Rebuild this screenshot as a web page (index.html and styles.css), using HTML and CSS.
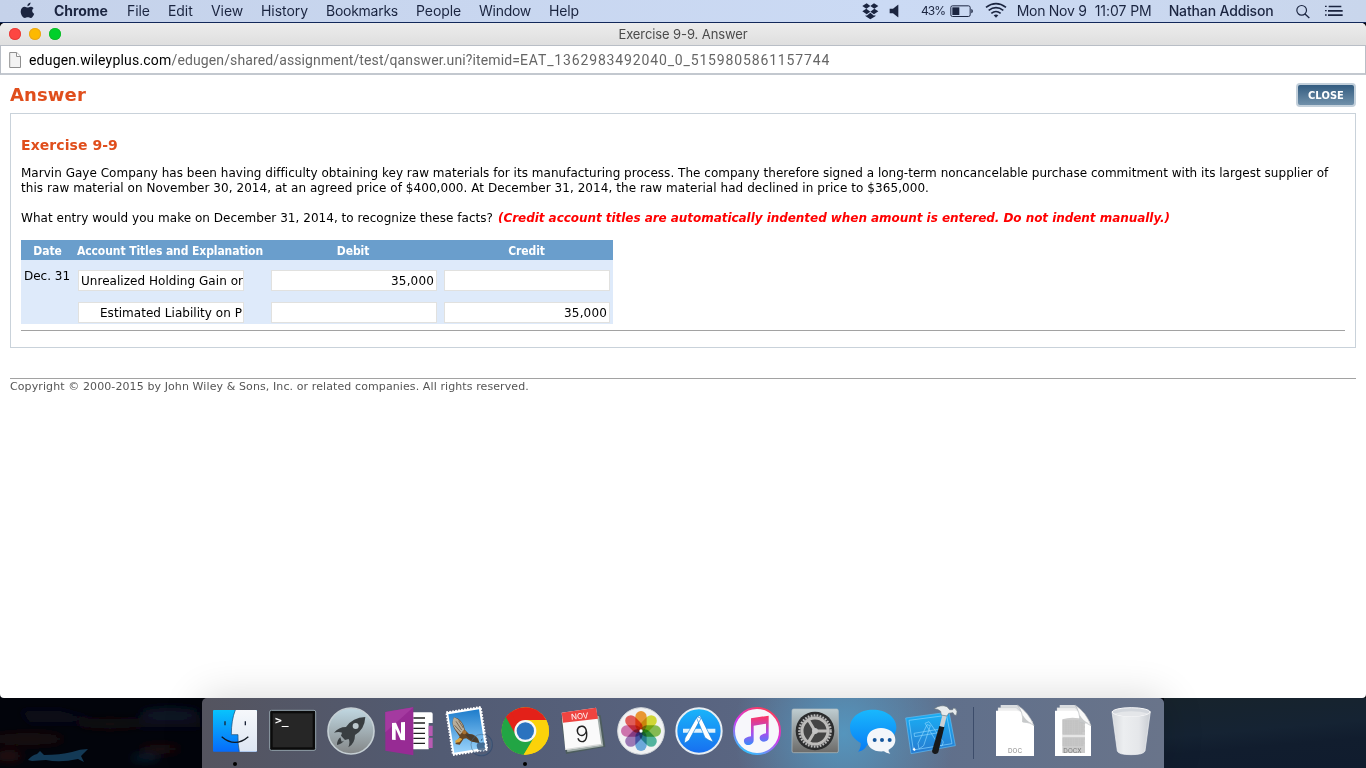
FILE: index.html
```html
<!DOCTYPE html>
<html lang="en">
<head>
<meta charset="utf-8">
<title>Exercise 9-9. Answer</title>
<link rel="stylesheet" href="styles.css">
</head>
<body>
<div class="desktop">
  <header class="menubar">
    <nav class="menus">
      <svg class="apple" viewBox="0 0 16 18" width="16" height="18"><path d="M10.600.6c.1 1.800-1.400 3.600-3.200 3.600C7.200 2.400 8.800.8 10.600.6zM13.600 6.300c-2 1.200-1.900 4.400.6 5.400-.6 1.800-2 4.300-3.500 4.300-1.100 0-1.600-.7-2.900-.7s-1.900.7-2.900.7C2.900 16 .7 12.700.7 9.500c0-3.100 2-4.800 4-4.800 1.200 0 2.200.8 3 .8.700 0 1.900-.9 3.400-.8 1.100.1 2 .6 2.500 1.600z"/></svg>
      <span class="menu app">Chrome</span>
      <span class="menu file">File</span>
      <span class="menu edit">Edit</span>
      <span class="menu view">View</span>
      <span class="menu history">History</span>
      <span class="menu bookmarks">Bookmarks</span>
      <span class="menu people">People</span>
      <span class="menu windows">Window</span>
      <span class="menu help">Help</span>
    </nav>
    <div class="status">
      <svg class="tray" viewBox="30 0 150 66" width="50" height="22"><path d="M37 18l13-8 11 8-12 8zM61 18l11-8 13 8-12 8zM37 34l12-8 12 9-11 8zM61 35l12-9 12 8-13 9zM47 45l3 2 11-9 11 9 4-2v4l-15 9-14-9z"/><path d="M119 26h10l15-12h1v38h-1l-15-12h-10z"/></svg>
      <span class="percent">43%</span>
      <svg class="tray2" viewBox="296 0 176 66" width="58.67" height="22"><rect x="301.500" y="17.500" width="58" height="32" rx="5" fill="none" stroke="#1b2540" stroke-width="3"/><rect x="306" y="22" width="21" height="23"/><path d="M363 27c6 2 6 11 0 13z"/><g fill="none" stroke="#1b2540" stroke-width="5"><path d="M407 22q30-22 60 0M415 31q22-16 44 0M423 40q14-11 28 0"/></g><path d="M430 46q7-5 14 0l-7 7z"/></svg>
      <span class="day">Mon Nov 9</span>
      <span class="time">11:07 PM</span>
      <span class="user">Nathan Addison</span>
      <svg class="tools" viewBox="1335 0 150 66" width="50" height="22"><g fill="none" stroke="#1b2540" stroke-width="3.500"><circle cx="1355" cy="31" r="14.500"/><path d="M1365 42l13 12" stroke-width="4"/></g><path d="M1425 17h5v4h-5zM1425 30h5v4h-5zM1425 43h5v4h-5zM1436 17h38v5h-38zM1434 30h44v5h-44zM1434 43h44v5h-44z"/></svg>
    </div>
  </header>

  <main class="window">
    <div class="titlebar">
      <div class="lights"><i class="red"></i><i class="yellow"></i><i class="green"></i></div>
      <span class="title">Exercise 9-9. Answer</span>
    </div>
    <div class="urlbar">
      <svg class="page-icon" viewBox="0 0 12 16" width="12" height="16"><path d="M.7.500h7l3.800 3.800v11.200H.7z" fill="#f3f3f3" stroke="#8f8f8f"/><path d="M7.500.500v4h4" fill="#fff" stroke="#8f8f8f"/></svg>
      <span class="domain">edugen.wileyplus.com</span><span class="path">/edugen/shared/assignment/test/qanswer.uni?itemid=</span><span class="item">EAT_1362983492040_0_5159805861157744</span>
    </div>
    <div class="page">
      <div class="page-head"><h1>Answer</h1><button class="close">CLOSE</button></div>
      <section class="card">
        <h2>Exercise 9-9</h2>
        <p class="problem"><span class="l1">Marvin Gaye Company has been having difficulty obtaining key raw materials for its manufacturing process. The company therefore signed a long-term noncancelable purchase commitment with its largest supplier of</span><br><span class="l2">this raw material on November 30, 2014, at an agreed price of $400,000. At December 31, 2014, the raw material had declined in price to $365,000.</span></p>
        <p class="question"><span class="ask">What entry would you make on December 31, 2014, to recognize these facts?</span><em>(Credit account titles are automatically indented when amount is entered. Do not indent manually.)</em></p>
        <div class="journal">
          <div class="row head"><span>Date</span><span class="acct">Account Titles and Explanation</span><span>Debit</span><span>Credit</span></div>
          <div class="row first"><span class="date">Dec. 31</span><div class="field">Unrealized Holding Gain or</div><div class="field num">35,000</div><div class="field num"></div></div>
          <div class="row second"><span></span><div class="field indent">Estimated Liability on P</div><div class="field num"></div><div class="field num">35,000</div></div>
        </div>
        <div class="rule"></div>
      </section>
      <footer class="copyright">Copyright © 2000-2015 by John Wiley &amp; Sons, Inc. or related companies. All rights reserved.</footer>
    </div>
  </main>

  <div class="bottom">
    <svg class="wall" viewBox="0 0 202 70" width="202" height="70">
      <defs><filter id="soft" x="-20%" y="-60%" width="140%" height="220%"><feGaussianBlur stdDeviation="4"/></filter></defs>
      <rect width="202" height="70" fill="#02040b"/>
      <g filter="url(#soft)"><path d="M20 13h40l30 8h110v8H130L100 24H30z" fill="#0a101c"/><ellipse cx="170" cy="16" rx="30" ry="6" fill="#0e1725"/><ellipse cx="28" cy="41" rx="36" ry="6" fill="#1b0c0b"/><ellipse cx="110" cy="26" rx="32" ry="5" fill="#140809"/><ellipse cx="160" cy="51" rx="20" ry="4" fill="#240f0c"/><ellipse cx="8" cy="58" rx="14" ry="5" fill="#2a100c"/><ellipse cx="145" cy="60" rx="14" ry="2" fill="#112c43"/></g>
      <path d="M28 62q4-5 9-6l3-3 4 4q16 0 28-3 8-3 16-3l-7 7 3 6-6-3q-18 4-32 1l-14 1z" fill="#133955"/>
    </svg>
    <div class="dock">
      <svg class="ic" viewBox="618 114 174 210"><defs>
        <linearGradient id="fb" x1="0" y1="0" x2="0" y2="1"><stop offset="0" stop-color="#08c3fc"/><stop offset="1" stop-color="#066bfa"/></linearGradient>
        <linearGradient id="fw" x1="0" y1="0" x2="0" y2="1"><stop offset="0" stop-color="#f6f8fb"/><stop offset="1" stop-color="#dde6f3"/></linearGradient></defs>
        <rect x="639" y="150" width="132" height="125" rx="3" fill="url(#fb)"/><path d="M706 150h62q3 0 3 3v119q0 3-3 3h-50q-5-22-4-51h-20q0-44 12-74z" fill="url(#fw)"/><path d="M706 150q-12 30-12 74h20q-1 29 4 51" fill="none" stroke="#17456f" stroke-width="2"/><path d="M675 184v12M736 184v12" stroke="#182336" stroke-width="4"/><path d="M665 230q40 34 80 0" fill="none" stroke="#101820" stroke-width="4"/><circle cx="705" cy="312" r="6"/></svg>

      <svg class="ic" viewBox="12 24 174 210"><rect x="29" y="61" width="138" height="120" rx="5" fill="#0b0b0b" stroke="#93a3ac" stroke-width="3"/><rect x="38" y="70" width="120" height="102" fill="#262626"/><text x="45" y="101" class="prompt">&gt;_</text></svg>

      <svg class="ic" viewBox="186 24 174 210"><defs><linearGradient id="rk" x1="0" y1="0" x2="0" y2="1"><stop offset="0" stop-color="#c1d8e2"/><stop offset="1" stop-color="#838687"/></linearGradient></defs><circle cx="273" cy="123" r="69" fill="url(#rk)" stroke="#c5cfd4" stroke-width="5"/><path d="M316 81q-38 1-58 30-22 0-36 17 14-4 24 0l-3 9 12 13 11-3q5 9-1 25 20-11 20-37 29-17 31-54z" fill="#393e41"/><path d="M241 142q-10 8-10 23 16-5 21-13l-7 3z" fill="#393e41"/><circle cx="287" cy="108" r="9" fill="#bdc8cd"/></svg>

      <svg class="ic" viewBox="360 24 174 210"><path d="M455 67h58q5 0 5 5v27h-12v79h-51z" fill="#fff"/><path d="M506 107h12v31h-12zM506 143h12v31h-12z" fill="#b85bb3"/><path d="M460 84h35M460 99h35M460 115h35M460 130h35M460 145h35M460 160h35" stroke="#222" stroke-width="4"/><path d="M376 66l84-14v144l-84-14z" fill="#972b94"/><path d="M376 66l84-14-84 75z" fill="#a43aa0"/><path d="M396 149V99l12-1 15 35V97l12-1v55l-13-1-15-34v34z" fill="#fff"/></svg>

      <svg class="ic" viewBox="534 24 174 210"><defs><linearGradient id="st" x1="0" y1="0" x2="0" y2="1"><stop offset="0" stop-color="#1d7ccb"/><stop offset="1" stop-color="#9bd4fb"/></linearGradient></defs><g fill="none" stroke="#3d4f70" stroke-width="4"><circle cx="664" cy="164" r="33"/><circle cx="664" cy="164" r="21"/></g><path d="M559 67L662 51l20 128-103 16z" fill="#fff" stroke="#fff" stroke-width="6" stroke-dasharray="5 4"/><path d="M565 73l92-15 18 115-92 15z" fill="url(#st)"/><path d="M582 82q25 4 33 38l12 12q26 0 31 26l-23-3-16-10-8 1-12 18-13-2 13-22-15-22q-12-18-2-36z" fill="#684622"/><path d="M582 82q-10 18 4 36l14 16 13-15q-7-29-31-37z" fill="#b8ad9a"/><path d="M588 94l17 26M584 106l18 20M596 92l14 22" stroke="#776754" stroke-width="3"/><path d="M616 134q19 25 42 24-10-24-32-26z" fill="#493c2e"/><path d="M586 152l13-9 8 4-9 10-12 1z" fill="#dda43c"/><circle cx="613" cy="127" r="6" fill="#a77132"/><circle cx="664" cy="164" r="31" fill="none" stroke="#486885" stroke-width="3" opacity=".5"/><path d="M650 165q3-11 13-7 10-4 13 4-6 8 1 13-7 12-14 6-12 3-13-16zM662 154q0-7 6-9 1 7-6 9z" fill="#2c4e73" opacity=".75"/></svg>

      <svg class="ic" viewBox="18 24 174 210"><circle cx="106" cy="123" r="71" fill="#fbd20a"/><path d="M106 123L44 88A71 71 0 0 1 169 90z" fill="#e32119"/><path d="M44 88A71 71 0 0 0 101 194l32-54-27-17-27 15z" fill="#22a544"/><path d="M169 90H106l29 52-34 52A71 71 0 0 0 169 90z" fill="#fbd20a"/><path d="M44 88q7-12 18-21l20 37-9 30z" fill="#e32119"/><path d="M47 80L79 138l-5 8-34-48z" fill="#22a544"/><circle cx="106" cy="123" r="33" fill="#f7f7f7"/><circle cx="106" cy="123" r="26" fill="#2b73bf"/><circle cx="105" cy="222" r="6"/></svg>

      <svg class="ic" viewBox="192 24 174 210"><path d="M212 84l120-8 14 94-118 22z" fill="#4d5d5e"/><path d="M216 86l111-8 13 91-108 17z" fill="#a3aeab"/><path d="M215 68l103-15 16 111-108 16z" fill="#fafafa"/><path d="M215 68l103-15 6 33-105 12z" fill="#ef4440"/><path d="M226 177l108-16v4l-107 15z" fill="#d6d8d7"/><text x="243" y="87" class="month" transform="rotate(-5 268 78)">NOV</text><text x="256" y="156" class="date-number" transform="rotate(-4 277 130)">9</text></svg>

      <svg class="ic" viewBox="366 24 174 210"><circle cx="453" cy="123" r="70" fill="#f1f2f3" stroke="#d5d9dc" stroke-width="3"/><g class="petals"><rect x="436" y="63" width="34" height="60" rx="17" fill="#f7941e"/><rect x="436" y="63" width="34" height="60" rx="17" fill="#d9df22" transform="rotate(45 453 123)"/><rect x="436" y="63" width="34" height="60" rx="17" fill="#81be45" transform="rotate(90 453 123)"/><rect x="436" y="63" width="34" height="60" rx="17" fill="#44b69b" transform="rotate(135 453 123)"/><rect x="436" y="63" width="34" height="60" rx="17" fill="#63a9e2" transform="rotate(180 453 123)"/><rect x="436" y="63" width="34" height="60" rx="17" fill="#9b71b7" transform="rotate(225 453 123)"/><rect x="436" y="63" width="34" height="60" rx="17" fill="#d56bad" transform="rotate(270 453 123)"/><rect x="436" y="63" width="34" height="60" rx="17" fill="#ee504a" transform="rotate(315 453 123)"/></g><circle cx="453" cy="123" r="5" fill="#fff"/></svg>

      <svg class="ic" viewBox="540 24 174 210"><defs><linearGradient id="as" x1="0" y1="0" x2="0" y2="1"><stop offset="0" stop-color="#19b5fa"/><stop offset="1" stop-color="#176ef0"/></linearGradient></defs><circle cx="627" cy="123" r="68" fill="url(#as)" stroke="#e7eef3" stroke-width="6"/><path d="M579 116h97v12h-97z" fill="#dff1fb"/><path d="M621 80l12 5-36 66-14 9 2-16zM619 82l11-6 30 61 10 19-13-5-12-8z" fill="#fff" stroke="#1585de" stroke-width="2"/></svg>

      <svg class="ic" viewBox="9 24 174 210"><defs><linearGradient id="note" x1="0" y1="0" x2="0" y2="1"><stop offset="0" stop-color="#ff335f"/><stop offset=".6" stop-color="#a750ee"/><stop offset="1" stop-color="#388afa"/></linearGradient><linearGradient id="ring" x1=".8" y1="0" x2=".3" y2="1"><stop offset="0" stop-color="#ff3d4a"/><stop offset=".5" stop-color="#d536ed"/><stop offset="1" stop-color="#31c3ff"/></linearGradient></defs><circle cx="96" cy="123" r="69" fill="#f7f7fb" stroke="url(#ring)" stroke-width="6"/><path d="M78 85l53-8v65c0 17-26 17-27 3-1-9 7-13 19-15V101l-37 6v43c0 18-27 20-29 5-2-10 9-14 21-16z" fill="url(#note)"/></svg>

      <svg class="ic" viewBox="183 24 174 210"><defs><linearGradient id="pr" x1="0" y1="0" x2="0" y2="1"><stop offset="0" stop-color="#bfcdd1"/><stop offset="1" stop-color="#6c6b69"/></linearGradient></defs><rect x="201" y="57" width="139" height="131" rx="5" fill="url(#pr)" stroke="#b5bfc2" stroke-width="2"/><circle cx="270" cy="123" r="58" fill="#2b2c2d"/><circle cx="270" cy="123" r="47" fill="#59595a" stroke="#bbb" stroke-width="7" stroke-dasharray="5 4"/><circle cx="270" cy="123" r="39" fill="#444" stroke="#bdbcba" stroke-width="9"/><path d="M270 123h39M270 123l-20-34M270 123l-20 34" stroke="#bdbcba" stroke-width="9"/><circle cx="270" cy="123" r="9" fill="#c5c5c5"/></svg>

      <svg class="ic" viewBox="357 24 174 210"><defs><linearGradient id="ms" x1="0" y1="0" x2="0" y2="1"><stop offset="0" stop-color="#19b8fd"/><stop offset="1" stop-color="#087cf5"/></linearGradient></defs><path d="M444 59c40 0 70 23 70 53s-30 54-70 54q-9 0-17-2-10 19-28 21 10-12 8-26c-21-11-32-27-32-47 0-30 29-53 69-53z" fill="url(#ms)"/><path d="M468 114c25 0 43 15 43 35 0 13-7 23-20 30-1 5 2 8 5 12-10-1-15-4-19-7-31 3-51-13-51-35 0-20 17-35 42-35z" fill="#f3f6fa"/><circle cx="449" cy="150" r="6" fill="#15569c"/><circle cx="471" cy="150" r="6" fill="#15569c"/><circle cx="494" cy="150" r="6" fill="#15569c"/></svg>

      <svg class="ic" viewBox="531 24 174 210"><defs><linearGradient id="xc" x1="0" y1="0" x2="0" y2="1"><stop offset="0" stop-color="#19b1f6"/><stop offset="1" stop-color="#2779cf"/></linearGradient></defs><path d="M542 84l130-18 19 101-133 24z" fill="url(#xc)" stroke="#63bdf3" stroke-width="2"/><g fill="none" stroke="#8bd6ff" stroke-width="2"><path d="M552 91l113-15 16 85-116 19zM567 130l78-13 2 10-78 13zM600 100l12-5 43 61-4 12-10-3zM606 104l10 3-20 60-14 10-3-17z"/></g><path d="M563 179l4-7 5 7-3 4z" fill="#fff"/><path d="M643 108l15 3-18 76q-3 6-11 5-8-2-8-9z" fill="#17191b"/><path d="M652 76l13 3-8 32-13-3z" fill="#cbd0d3"/><path d="M627 56q20-14 39-6l8 9h9l2-5 5 1q10 8 4 21l-6-1-4-7-13 2-5 8-17-3-2-11q-7-7-20-8z" fill="#e6eaec" stroke="#6d7880" stroke-width="2"/></svg>

      <div class="divider"></div>

      <svg class="ic" viewBox="78 84 174 210"><path d="M122 105h50l44 50v96h-94z" fill="#d9dcdf"/><path d="M114 113h54l50 42v98H114z" fill="#eee" stroke="#bbc0c5"/><path d="M108 122h62q26 0 52 45v91H108z" fill="#fff"/><path d="M172 105q34 22 50 62-11-10-34-11 2-29-16-51z" fill="#fafafa" stroke="#b5b8bb" stroke-width="2"/><path d="M188 135q12 20 28 25l-28-4z" fill="#c7c9ca"/><text x="144" y="248" class="kind">DOC</text></svg>

      <svg class="ic" viewBox="252 84 174 210"><path d="M299 105h45l44 50v96h-89z" fill="#d9dcdf"/><path d="M291 113h54l44 42v98h-98z" fill="#eee" stroke="#bbc0c5"/><path d="M285 122h60q26 0 48 45v91H285z" fill="#fff"/><path d="M307 148q33-10 68 2v99h-68z" fill="#ccc"/><g stroke="#b2b2b2" stroke-width="2" stroke-dasharray="5 1 9 1"><path d="M307 153h64M307 159h66M307 165h64M307 171h67M307 177h65M307 183h67M307 189h60M307 207h67M307 213h65M307 219h66M307 225h63"/></g><path d="M307 198h68" stroke="#fff" stroke-width="3"/><path d="M345 105q34 22 48 62-11-10-34-11 2-29-14-51z" fill="#f8f8f8" stroke="#b5b8bb" stroke-width="2"/><path d="M359 135q12 20 28 25l-28-4z" fill="#c7c9ca"/><text x="310" y="248" class="kind docx">DOCX</text></svg>

      <svg class="ic" viewBox="426 84 174 210"><defs><linearGradient id="tr"><stop offset="0" stop-color="#d5d8dc"/><stop offset=".3" stop-color="#eceef0"/><stop offset=".7" stop-color="#e5e7ea"/><stop offset="1" stop-color="#c8ccd2"/></linearGradient></defs><path d="M456 125l16 118q3 11 41 11t42-11l16-118z" fill="url(#tr)" stroke="#f5f6f7" stroke-width="2"/><ellipse cx="513.500" cy="126" rx="57" ry="13" fill="#d2d6dc" stroke="#f8f8f9" stroke-width="3"/><path d="M461 131q52 16 105 0-24-7-52-7t-53 7z" fill="#e4e6e9"/></svg>
    </div>
    <div class="wall night"></div>
  </div>
</div>
</body>
</html>
```
FILE: styles.css
```css
* { box-sizing: border-box; }
body { margin: 0; background: #04060d; font-family: "DejaVu Sans", Verdana, sans-serif; }
.desktop { width: 1366px; height: 768px; display: flex; flex-direction: column; overflow: hidden; }
span, em { white-space: nowrap; }

/* menu bar */
.menubar { height: 23px; flex: none; display: flex; justify-content: space-between; background: linear-gradient(90deg, #c5d2ea, #cbdaf4 65%, #c9d6ec); border-bottom: 1px solid #12285a; font: 14px/22px Inter, sans-serif; color: #1b2540; }
.menubar svg { fill: #1b2540; flex: none; }
.menus, .status { display: flex; }
.menus { padding-left: 20px; }
.menu { margin-right: 18px; letter-spacing: -.06px; }
.apple { margin: 2px 18px 0 0; }
.app { width: 55px; font-weight: 700; }
.file { width: 23px; }
.edit { width: 25px; }
.view { width: 32px; }
.history { width: 47px; }
.bookmarks { width: 72px; letter-spacing: -.26px; }
.people { width: 45px; }
.windows { width: 52px; letter-spacing: -.27px; }
.help { width: 30px; letter-spacing: -.13px; }
.status { width: 506px; }
.percent { width: 25px; margin-left: 11px; font-size: 12px; letter-spacing: -.98px; }
.tray2 { margin-left: 3px; }
.day { width: 70px; margin-left: 9px; letter-spacing: -.27px; }
.time { width: 57px; margin-left: 8px; letter-spacing: -.06px; }
.user { width: 105px; margin-left: 17px; font-weight: 500; letter-spacing: -.14px; }
.tools { margin-left: 21px; }

/* browser window */
.window { height: 675px; flex: none; background: #fff; border-radius: 5px 5px 4px 4px; overflow: hidden; }
.titlebar { height: 22px; display: grid; grid-template-columns: 1fr auto 1fr; background: linear-gradient(#ececec, #dfdfdf); align-items: center; }
.lights { display: flex; gap: 8px; padding-left: 9px; }
.lights i { width: 12px; height: 12px; border-radius: 50%; }
.red { background: #fd4642; box-shadow: inset 0 0 0 1px #e8403c; }
.yellow { background: #fdb900; box-shadow: inset 0 0 0 1px #eaa71a; }
.green { background: #00d02b; box-shadow: inset 0 0 0 1px #10bb2c; }
.title { font: 13px/20px Inter, sans-serif; letter-spacing: -.1px; color: #4b4b4b; }
.urlbar { height: 30px; display: flex; align-items: center; border: 1px solid #b9bec6; border-bottom: 2px solid #c3c8cf; padding-left: 8px; font: 14px/26px Roboto, sans-serif; color: #666; }
.page-icon { margin-right: 8px; }
.domain { color: #000; width: 142.500px; letter-spacing: .2px; }
.path { letter-spacing: .12px; }
.item { letter-spacing: .85px; }

/* answer page */
.page { padding: 0 10px; font-size: 12px; line-height: 15px; color: #000; }
.page-head { height: 38px; display: flex; justify-content: space-between; padding-top: 8px; }
h1 { margin: 0; font-size: 18px; line-height: 24px; letter-spacing: .13px; color: #e04e1c; }
.close { width: 60px; height: 24px; border: 2px solid #c3d0db; border-radius: 4px; background: linear-gradient(#335c80, #7090aa); color: #fff; font: bold 11px/18px "DejaVu Sans Condensed", "DejaVu Sans", sans-serif; letter-spacing: .1px; padding: 2px 0 0; }
.card { height: 235px; border: 1px solid #c9d2da; padding: 21px 10px 0; }
h2 { margin: 0 0 11px; font-size: 14px; line-height: 20px; letter-spacing: .07px; color: #e04e1c; }
p { margin: 0; }
.problem { margin-bottom: 15px; }
.l1 { letter-spacing: .02px; }
.l2 { letter-spacing: .059px; }
.question { display: flex; }
.ask { width: 477px; letter-spacing: .035px; }
.question em { font-weight: 700; color: #f00; letter-spacing: -.046px; }
.journal { width: 592px; margin-top: 14px; background: #deeafa; }
.row { display: grid; grid-template-columns: 57px 166px 27px 166px 7px 166px; }
.head { grid-template-columns: 53px 192px 174px 173px; height: 20px; background: #6a9ecc; color: #fff; text-align: center; font: bold 12px/23px "DejaVu Sans Condensed", "DejaVu Sans", sans-serif; letter-spacing: -.09px; }
.first { height: 42px; padding-top: 10px; }
.second { height: 22px; }
.date { padding-left: 3px; line-height: 13px; }
.field { height: 21px; background: #fff; border: 1px solid #e1e1df; padding: 0 2px; line-height: 21px; letter-spacing: .04px; overflow: hidden; white-space: nowrap; }
.field:nth-child(3) { grid-column: 4; }
.field:nth-child(4) { grid-column: 6; }
.indent { padding-left: 21px; }
.num { text-align: right; letter-spacing: .16px; }
.rule { margin-top: 6px; border-top: 1px solid #a2a2a2; }
.copyright { margin-top: 30px; border-top: 1px solid #a2a2a2; font-size: 11px; line-height: 16px; letter-spacing: .1px; color: #555; }

/* dock strip */
.bottom { height: 70px; flex: none; display: flex; }
.wall { width: 202px; height: 70px; flex: none; }
.night { background: linear-gradient(175deg, #17232c, #152333 45%, #111d2e 65%, #101c2e); }
.dock { position: relative; width: 962px; display: flex; padding-left: 4px; border-radius: 5px 5px 0 0; background: radial-gradient(ellipse 110px 110px at 642px 35px, #5595bd, rgba(85,149,189,0)), linear-gradient(90deg, #54545f, #525b73 25%, #58637f 50%, #5f6f8b 75%, #69748a); box-shadow: 0 0 40px rgba(0,0,0,.16); }
.ic { width: 58px; height: 70px; flex: none; }
.divider { width: 1px; height: 52px; margin: 9px 12px 0 13px; background: #3c4c6a; flex: none; }
.prompt { font: bold 34px "DejaVu Sans Mono", monospace; fill: #fff; }
.month { font: 24px Inter, sans-serif; fill: #fff; }
.date-number { font: 300 67px Inter, sans-serif; fill: #222; }
.petals rect { mix-blend-mode: multiply; opacity: .9; }
.kind { font: 19px Inter, sans-serif; fill: #888; }
.docx { fill: #777; }
```
